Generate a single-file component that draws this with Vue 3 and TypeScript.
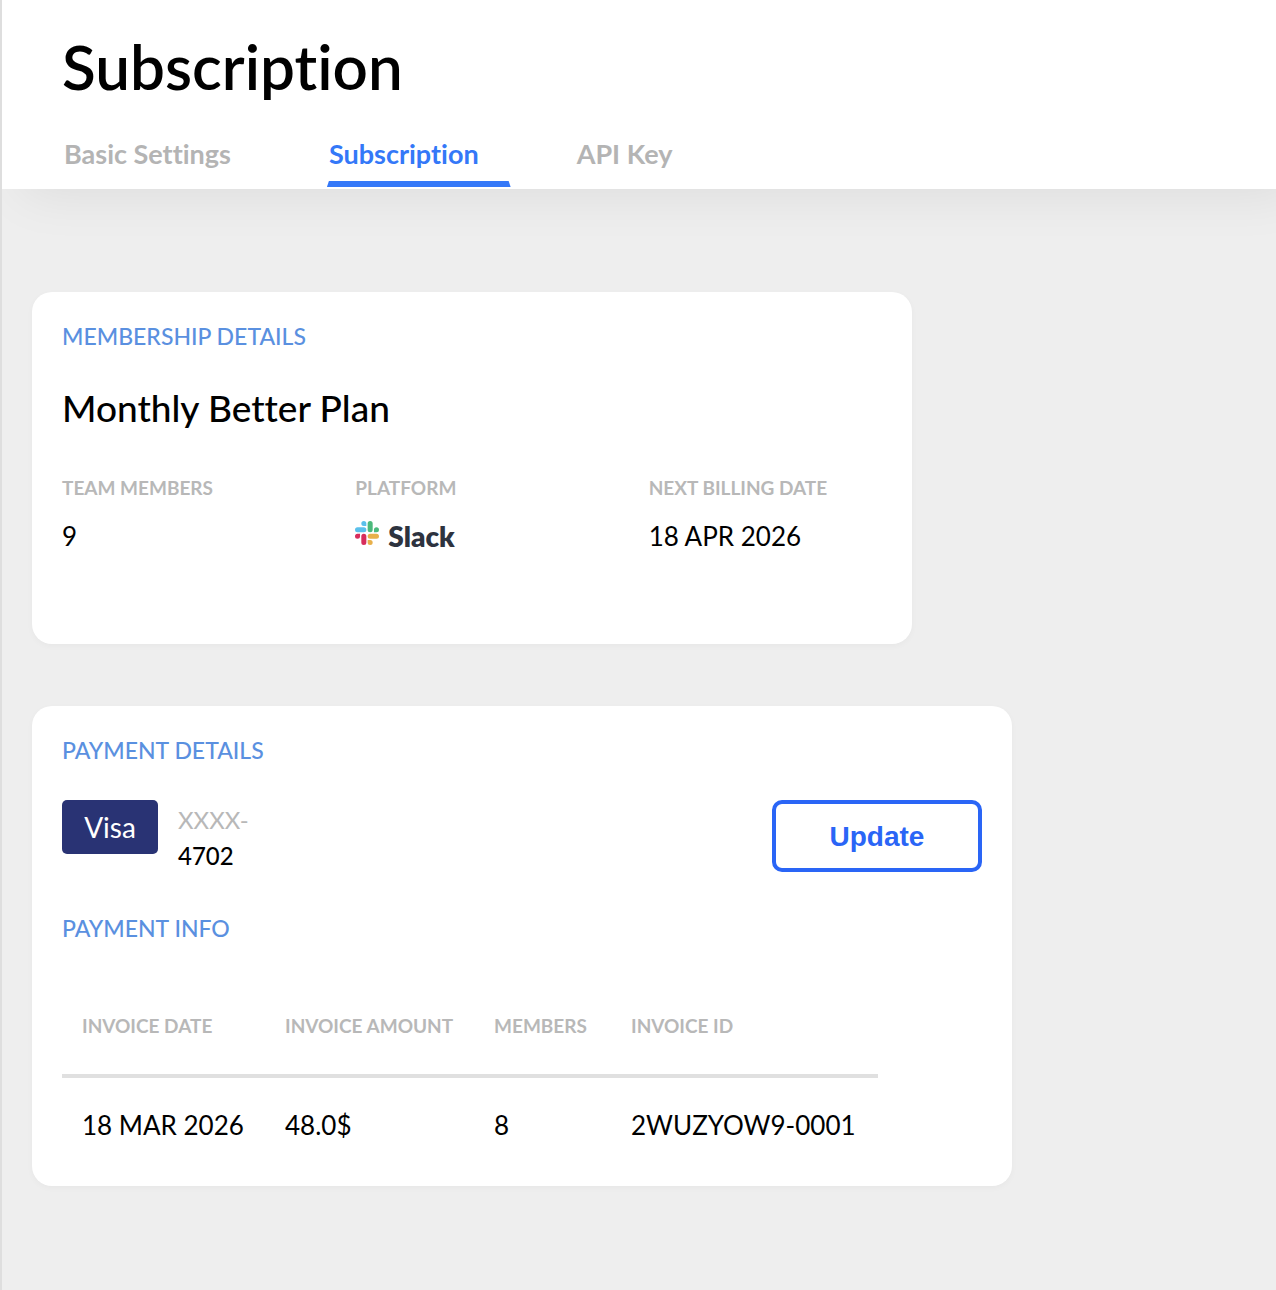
<script setup lang="ts">
import { ref } from 'vue'

interface Invoice {
  date: string
  amount: string
  members: number
  id: string
}

const tabs = ['Basic Settings', 'Subscription', 'API Key']
const activeTab = ref('Subscription')

const invoices: Invoice[] = [
  { date: '18 MAR 2026', amount: '48.0$', members: 8, id: '2WUZYOW9-0001' },
]
</script>

<template>
  <div class="page">
    <header class="header">
      <h1 class="title">Subscription</h1>
      <nav class="tabs">
        <a
          v-for="tab in tabs"
          :key="tab"
          href="#"
          class="tab"
          :class="{ active: tab === activeTab }"
          @click.prevent="activeTab = tab"
        >{{ tab }}</a>
      </nav>
    </header>

    <main class="content">
      <section class="card membership">
        <h2 class="heading">MEMBERSHIP DETAILS</h2>
        <p class="plan">Monthly Better Plan</p>
        <dl class="facts">
          <div class="fact">
            <dt>TEAM MEMBERS</dt>
            <dd>9</dd>
          </div>
          <div class="fact">
            <dt>PLATFORM</dt>
            <dd class="platform">
              <svg class="slack" viewBox="0 0 122.8 122.8" aria-hidden="true">
                <path fill="#d72d5c" d="M25.8 77.6a12.9 12.9 0 1 1-12.9-12.9h12.9zM32.3 77.6a12.9 12.9 0 0 1 25.8 0v32.3a12.9 12.9 0 0 1-25.8 0z" />
                <path fill="#5bc0eb" d="M45.2 25.8a12.9 12.9 0 1 1 12.9-12.9v12.9zM45.2 32.3a12.9 12.9 0 0 1 0 25.8H12.9a12.9 12.9 0 0 1 0-25.8z" />
                <path fill="#4cb97c" d="M97 45.2a12.9 12.9 0 1 1 12.9 12.9H97zM90.5 45.2a12.9 12.9 0 0 1-25.8 0V12.9a12.9 12.9 0 0 1 25.8 0z" />
                <path fill="#e8b04a" d="M77.6 97a12.9 12.9 0 1 1-12.9 12.9V97zM77.6 90.5a12.9 12.9 0 0 1 0-25.8h32.3a12.9 12.9 0 0 1 0 25.8z" />
              </svg>
              <span>Slack</span>
            </dd>
          </div>
          <div class="fact">
            <dt>NEXT BILLING DATE</dt>
            <dd>18 APR 2026</dd>
          </div>
        </dl>
      </section>

      <section class="card payment">
        <h2 class="heading">PAYMENT DETAILS</h2>
        <div class="method">
          <span class="brand">Visa</span>
          <div class="number">
            <span class="mask">XXXX-</span>
            <span>4702</span>
          </div>
          <button type="button" class="update">Update</button>
        </div>
        <h2 class="heading">PAYMENT INFO</h2>
        <table class="invoices">
          <colgroup>
            <col class="col-date" />
            <col class="col-amount" />
            <col class="col-members" />
            <col />
          </colgroup>
          <thead>
            <tr>
              <th scope="col">INVOICE DATE</th>
              <th scope="col">INVOICE AMOUNT</th>
              <th scope="col">MEMBERS</th>
              <th scope="col">INVOICE ID</th>
            </tr>
          </thead>
          <tbody>
            <tr v-for="invoice in invoices" :key="invoice.id">
              <td>{{ invoice.date }}</td>
              <td>{{ invoice.amount }}</td>
              <td>{{ invoice.members }}</td>
              <td>{{ invoice.id }}</td>
            </tr>
          </tbody>
        </table>
      </section>
    </main>
  </div>
</template>

<style>
body {
  margin: 0;
  background: #eeeeee;
}
</style>

<style scoped>
.page {
  box-sizing: border-box;
  min-height: 100vh;
  border-left: 2px solid #dedede;
  background: #eeeeee;
  color: #000;
  font-family: Lato, "Liberation Sans", sans-serif;
  font-size: 26px;
  font-variant-ligatures: no-common-ligatures;
}

.header {
  padding: 30px 60px 2px;
  background: #fff;
  box-shadow: 20px 4px 50px rgba(0, 0, 0, 0.08);
  clip-path: inset(0 0 -100px 0);
}

.title {
  margin: 0;
  font-size: 62px;
  font-weight: 600;
  line-height: 72px;
}

.tabs {
  display: flex;
  gap: 64px;
  margin-top: 34px;
}

.tab {
  position: relative;
  box-sizing: border-box;
  height: 51px;
  padding: 0 32px 0 2px;
  color: #b4b4b4;
  font-size: 27px;
  font-weight: 700;
  line-height: 36px;
  text-decoration: none;
  white-space: nowrap;
}

.tab.active {
  color: #3478f8;
}

.tab.active::after {
  content: "";
  position: absolute;
  left: 0;
  right: 0;
  bottom: 0;
  height: 6px;
  background: #3478f8;
  clip-path: polygon(2px 0, calc(100% - 2px) 0, 100% 100%, 0 100%);
}

.content {
  display: flex;
  flex-direction: column;
  gap: 62px;
  padding: 103px 30px;
}

.card {
  box-sizing: border-box;
  width: 100%;
  padding: 28px 30px;
  border-radius: 20px;
  background: #fff;
  box-shadow: 0 2px 6px rgba(0, 0, 0, 0.03);
}

.membership {
  max-width: 880px;
  padding-bottom: 90px;
}

.payment {
  max-width: 980px;
  padding-bottom: 14px;
}

.heading {
  margin: 0;
  color: #5a90e0;
  font-size: 23px;
  font-weight: 500;
  line-height: 32px;
}

.plan {
  margin: 32px 0 0;
  font-size: 37px;
  font-weight: 500;
  line-height: 48px;
}

.facts {
  display: grid;
  grid-template-columns: repeat(3, 1fr);
  column-gap: 60px;
  margin: 44px 0 0;
}

.fact {
  white-space: nowrap;
}

.facts dt,
.invoices th {
  color: #b8b8b8;
  font-size: 19px;
  font-weight: 700;
  line-height: 24px;
}

.facts dd {
  margin: 18px 0 0;
  line-height: 36px;
}

.platform {
  display: flex;
  align-items: center;
  gap: 9px;
  color: #2d333f;
  font-size: 28px;
  font-weight: 800;
}

.slack {
  width: 24px;
  height: 24px;
  margin-bottom: 6px;
}

.method {
  display: flex;
  align-items: flex-start;
  margin: 34px 0 38px;
}

.brand {
  width: 96px;
  border-radius: 5px;
  background: #293374;
  color: #fff;
  font-size: 28px;
  line-height: 54px;
  text-align: center;
}

.number {
  display: flex;
  flex-direction: column;
  margin-left: 20px;
  font-size: 24px;
  font-weight: 500;
  line-height: 36px;
  padding-top: 2px;
}

.mask {
  color: #b8b8b8;
  font-weight: 400;
}

.update {
  width: 210px;
  height: 72px;
  margin-left: auto;
  padding: 2px 0 0;
  border: 4px solid #2a65f6;
  border-radius: 10px;
  background: #fff;
  color: #2a65f6;
  font-family: "Liberation Sans", sans-serif;
  font-size: 28px;
  font-weight: 700;
  cursor: pointer;
}

.invoices {
  width: 816px;
  max-width: 100%;
  margin-top: 34px;
  border-collapse: collapse;
  table-layout: fixed;
}

.col-date {
  width: 203px;
}

.col-amount {
  width: 209px;
}

.col-members {
  width: 137px;
}

.invoices th,
.invoices td {
  padding: 0 20px;
  text-align: left;
  white-space: nowrap;
}

.invoices th {
  height: 96px;
  border-bottom: 4px solid #e0e0e0;
}

.invoices td {
  height: 94px;
  line-height: 36px;
}
</style>
